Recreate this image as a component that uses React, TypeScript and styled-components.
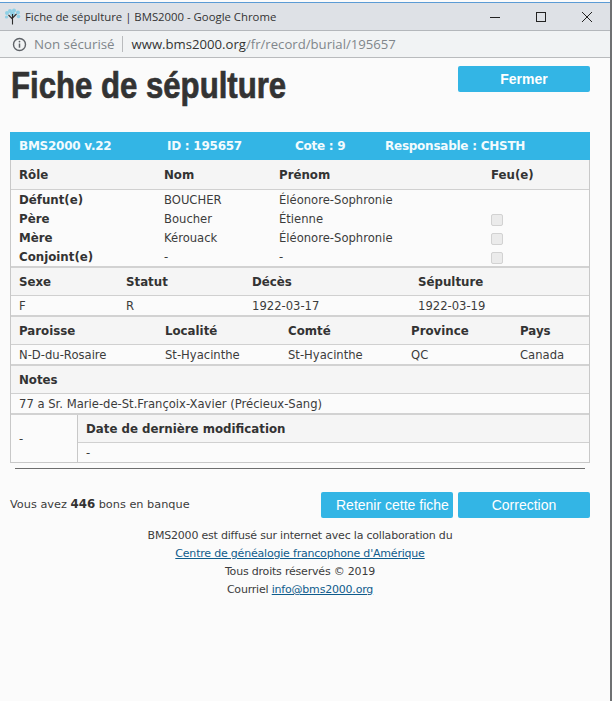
import React from "react";
import styled, { createGlobalStyle } from "styled-components";

const Global = createGlobalStyle`
  html, body { margin: 0; padding: 0; background: #fff; }
  * { box-sizing: border-box; }
`;

const Win = styled.div`
  width: 612px;
  height: 701px;
  border-right: 2px solid #6f7173;
  background: #fbfbfb;
  display: flex;
  flex-direction: column;
  font-family: "DejaVu Sans", Verdana, sans-serif;
  color: #3c3c3c;
`;
const TitleBar = styled.div`
  height: 29px;
  margin-top: 2px;
  border-top: 1px solid #5b9bd5;
  border-bottom: 1px solid #b4b7bb;
  background: #dee1e6;
  display: flex;
  align-items: center;
  padding-left: 4px;
  font: 11.35px "Open Sans", sans-serif;
  color: #333;
`;
const TitleText = styled.span`
  margin-left: 4px;
  flex: 1;
`;
const WinBtn = styled.span`
  width: 46px;
  height: 16px;
  display: flex;
  align-items: center;
  justify-content: center;
`;
const AddressBar = styled.div`
  height: 27px;
  background: #f1f3f4;
  border-bottom: 1px solid #b9bbbd;
  display: flex;
  align-items: center;
  padding-left: 12px;
  font: 13.3px "Open Sans", sans-serif;
  color: #80868b;
`;
const Secure = styled.span`
  margin-left: 7px;
  padding-right: 7px;
  border-right: 1px solid #b9bbbd;
  line-height: 16px;
`;
const Url = styled.span`
  margin-left: 9px;
  font-size: 13.15px;
  b { font-weight: 400; color: #333; }
`;
const Head = styled.div`
  display: flex;
  justify-content: space-between;
  align-items: flex-start;
  padding: 8px 20px 0 11px;
  height: 74px;
`;
const Title = styled.h1`
  margin: 0;
  font: 700 36px/40px "Liberation Sans", sans-serif;
  color: #333;
  white-space: nowrap;
  -webkit-text-stroke: 0.7px #333;
  transform: scaleX(0.865);
  transform-origin: left center;
`;
const Btn = styled.button<{ $bold?: boolean }>`
  width: 132px;
  height: 26px;
  flex: none;
  border: 0;
  border-radius: 2px;
  background: #33b5e5;
  color: #fff;
  padding: 0;
  font: ${(p) => (p.$bold ? "700 14px" : "400 14px")} "Liberation Sans", sans-serif;
  text-align: center;
`;
const RightBtn = styled(Btn)`
  padding-left: 15px;
  text-align: left;
  white-space: nowrap;
`;
const Card = styled.div`
  margin: 0 0 0 10px;
  border: 1px solid #c8c8c8;
  border-top: 0;
  width: 580px;
`;
const Banner = styled.div`
  height: 28px;
  margin: 0 -1px;
  background: #33b5e5;
  display: grid;
  grid-template-columns: 148px 128px 90px 1fr;
  align-items: center;
  padding-left: 9px;
  color: #f2fbfe;
  font-size: 12px;
  font-weight: 700;
  letter-spacing: -0.25px;
`;
const Row = styled.div<{ $cols: string; $head?: boolean; $tall?: boolean }>`
  display: grid;
  grid-template-columns: ${(p) => p.$cols};
  align-items: center;
  padding-left: 8px;
  height: ${(p) => (p.$head ? (p.$tall ? 30 : 28) : 19)}px;
  font-size: ${(p) => (p.$head ? "11.8px" : "11.6px")};
  font-weight: ${(p) => (p.$head ? 700 : 400)};
  color: ${(p) => (p.$head ? "#333" : "inherit")};
  background: ${(p) => (p.$head ? "#f5f5f5" : "transparent")};
  border-bottom: ${(p) => (p.$head ? "1px solid #d0d0d0" : "0")};
`;
const Section = styled.div`
  border-bottom: 2px solid #d2d2d2;
`;
const Strong = styled.span`
  font-size: 11.8px;
  font-weight: 700;
  color: #333;
`;
const Box = styled.span`
  display: block;
  width: 12px;
  height: 12px;
  margin-top: 2px;
  border-radius: 2px;
  border: 1px solid #d2d2d2;
  background: #ebebeb;
`;
const Last = styled.div`
  display: grid;
  grid-template-columns: 67px 1fr;
`;
const LastLeft = styled.div`
  display: flex;
  align-items: center;
  padding-left: 8px;
  font-size: 11.6px;
  border-right: 1px solid #c8c8c8;
`;
const Rule = styled.hr`
  width: 570px;
  margin: 5px 0 0 15px;
  border: 0;
  border-top: 1px solid #6d6d6d;
`;
const Actions = styled.div`
  display: flex;
  align-items: center;
  gap: 5px;
  padding: 0 20px 0 10px;
  margin-top: 23px;
  font-size: 11.3px;
`;
const Bank = styled.span`
  flex: 1;
  margin-top: -3px;
  b { font-size: 11.8px; color: #333; }
`;
const Footer = styled.div`
  width: 580px;
  margin: 9px 0 0 10px;
  text-align: center;
  font-size: 11px;
  letter-spacing: -0.2px;
  line-height: 18px;
  a { color: #0f5c8c; text-decoration: underline; }
`;

const Tree = () => (
  <svg width="17" height="17" viewBox="0 0 17 17">
    <g fill="#8fd0e6">
      <circle cx="3" cy="5" r="2" />
      <circle cx="6" cy="3" r="2" />
      <circle cx="10" cy="2.5" r="2" />
      <circle cx="14" cy="4.5" r="2" />
      <circle cx="2.5" cy="9" r="1.6" />
      <circle cx="14.5" cy="8.5" r="1.8" />
      <circle cx="8.5" cy="6" r="2.4" />
    </g>
    <path d="M8.5 16.5V6M8.5 11L4.5 7M8.5 10l4-4" stroke="#2c2c2c" strokeWidth="1.1" fill="none" />
  </svg>
);
const Info = () => (
  <svg width="15" height="15" viewBox="0 0 15 15">
    <circle cx="7.5" cy="7.5" r="6" fill="none" stroke="#5f6368" strokeWidth="1.4" />
    <path d="M7.5 6.5v4.2" stroke="#5f6368" strokeWidth="1.5" />
    <circle cx="7.5" cy="4.6" r="0.9" fill="#5f6368" />
  </svg>
);

const roleCols = "145px 115px 212px 1fr";
const vitalCols = "107px 126px 166px 1fr";
const placeCols = "146px 123px 123px 109px 1fr";

export default function App() {
  return (
    <Win>
      <Global />
      <TitleBar>
        <Tree />
        <TitleText>Fiche de sépulture | BMS2000 - Google Chrome</TitleText>
        <WinBtn>
          <svg width="12" height="12" viewBox="0 0 12 12"><path d="M1 6.5h10" stroke="#222" /></svg>
        </WinBtn>
        <WinBtn>
          <svg width="12" height="12" viewBox="0 0 12 12"><rect x="1.5" y="1.5" width="9" height="9" fill="none" stroke="#222" /></svg>
        </WinBtn>
        <WinBtn>
          <svg width="12" height="12" viewBox="0 0 12 12"><path d="M1 1l10 10M11 1L1 11" stroke="#222" /></svg>
        </WinBtn>
      </TitleBar>
      <AddressBar>
        <Info />
        <Secure>Non sécurisé</Secure>
        <Url><b>www.bms2000.org</b>/fr/record/burial/195657</Url>
      </AddressBar>
      <Head>
        <Title>Fiche de sépulture</Title>
        <Btn $bold>Fermer</Btn>
      </Head>
      <Card>
        <Banner>
          <span>BMS2000 v.22</span>
          <span>ID : 195657</span>
          <span>Cote : 9</span>
          <span>Responsable : CHSTH</span>
        </Banner>
        <Section>
          <Row $cols={roleCols} $head $tall>
            <span>Rôle</span><span>Nom</span><span>Prénom</span><span>Feu(e)</span>
          </Row>
          <Row $cols={roleCols}><Strong>Défunt(e)</Strong><span>BOUCHER</span><span>Éléonore-Sophronie</span><span /></Row>
          <Row $cols={roleCols}><Strong>Père</Strong><span>Boucher</span><span>Étienne</span><span><Box /></span></Row>
          <Row $cols={roleCols}><Strong>Mère</Strong><span>Kérouack</span><span>Éléonore-Sophronie</span><span><Box /></span></Row>
          <Row $cols={roleCols}><Strong>Conjoint(e)</Strong><span>-</span><span>-</span><span><Box /></span></Row>
        </Section>
        <Section>
          <Row $cols={vitalCols} $head>
            <span>Sexe</span><span>Statut</span><span>Décès</span><span>Sépulture</span>
          </Row>
          <Row $cols={vitalCols}><span>F</span><span>R</span><span>1922-03-17</span><span>1922-03-19</span></Row>
        </Section>
        <Section>
          <Row $cols={placeCols} $head>
            <span>Paroisse</span><span>Localité</span><span>Comté</span><span>Province</span><span>Pays</span>
          </Row>
          <Row $cols={placeCols}><span>N-D-du-Rosaire</span><span>St-Hyacinthe</span><span>St-Hyacinthe</span><span>QC</span><span>Canada</span></Row>
        </Section>
        <Section>
          <Row $cols="1fr" $head><span>Notes</span></Row>
          <Row $cols="1fr"><span>77 a Sr. Marie-de-St.Françoix-Xavier (Précieux-Sang)</span></Row>
        </Section>
        <Last>
          <LastLeft>-</LastLeft>
          <div>
            <Row $cols="1fr" $head><span>Date de dernière modification</span></Row>
            <Row $cols="1fr"><span>-</span></Row>
          </div>
        </Last>
      </Card>
      <Rule />
      <Actions>
        <Bank>Vous avez <b>446</b> bons en banque</Bank>
        <RightBtn>Retenir cette fiche</RightBtn>
        <Btn>Correction</Btn>
      </Actions>
      <Footer>
        <div>BMS2000 est diffusé sur internet avec la collaboration du</div>
        <div><a href="#c">Centre de généalogie francophone d'Amérique</a></div>
        <div>Tous droits réservés © 2019</div>
        <div>Courriel <a href="#m">info@bms2000.org</a></div>
      </Footer>
    </Win>
  );
}
